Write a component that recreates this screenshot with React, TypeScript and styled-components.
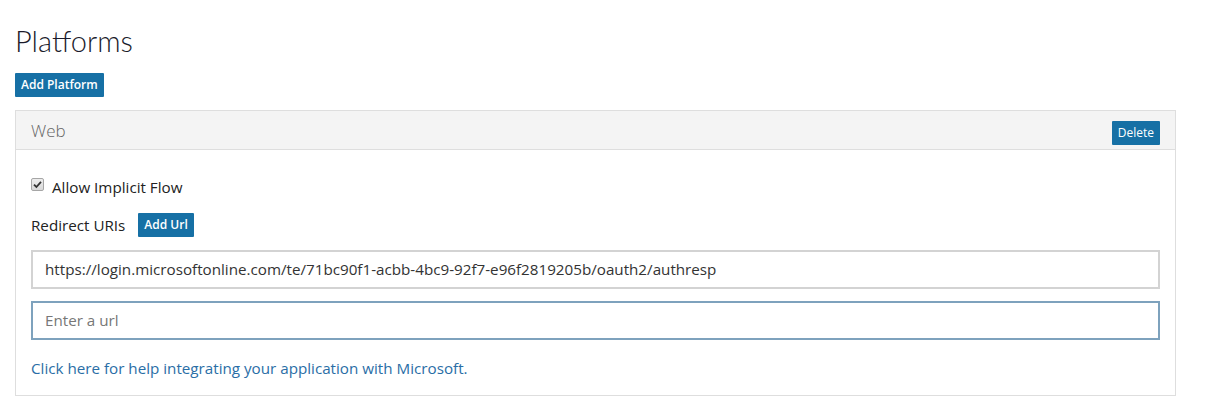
import React, { type FC } from 'react'
import styled, { createGlobalStyle } from 'styled-components'

const primary = '#1670a5'
const fontStack = '"Open Sans", "Noto Sans", "Liberation Sans", sans-serif'

const GlobalStyle = createGlobalStyle`
  body {
    margin: 0;
    background: #fff;
    font-family: ${fontStack};
    color: #222;
  }
`

const Page = styled.div`
  padding: 22px 36px 10px 15px;
`

const Title = styled.h1`
  margin: 0 0 12px;
  font-family: Lato, ${fontStack};
  font-size: 29px;
  line-height: 38px;
  font-weight: 300;
  color: #1b1b2b;
`

const SmallButton = styled.button<{ $semibold?: boolean }>`
  height: 24px;
  padding: 0 6px;
  border: none;
  border-radius: 1px;
  background: ${primary};
  color: #fff;
  font-family: ${fontStack};
  font-size: 12px;
  font-weight: ${({ $semibold }) => ($semibold ? 600 : 400)};
  cursor: pointer;
`

const Panel = styled.section`
  margin-top: 13px;
  border: 1px solid #dedede;
  width: 1161px;
  box-sizing: border-box;
`

const PanelHeader = styled.header`
  display: flex;
  justify-content: space-between;
  align-items: flex-end;
  padding: 10px 15px 4px;
  background: #f4f4f4;
  border-bottom: 1px solid #dedede;
`

const PanelTitle = styled.h2`
  margin: -4px 0 0;
  align-self: center;
  font-size: 17px;
  font-weight: 300;
  color: #666;
  line-height: 24px;
`

const PanelBody = styled.div`
  padding: 27px 15px 17px;
  font-size: 15.2px;
`

const CheckRow = styled.label`
  display: flex;
  align-items: center;
  gap: 8px;
  height: 20px;
  color: #222;
`

const CheckBox = styled.span`
  display: inline-flex;
  align-items: center;
  justify-content: center;
  width: 11px;
  height: 11px;
  margin-top: -4px;
  border: 1px solid #a6a6a6;
  border-radius: 2px;
  background: linear-gradient(#ededed, #d8d8d8);
`

const UriRow = styled.div`
  display: flex;
  align-items: center;
  gap: 13px;
  margin-top: 16px;
`

const UrlInput = styled.input<{ $active?: boolean }>`
  display: block;
  width: 100%;
  box-sizing: border-box;
  height: 39px;
  margin-top: ${({ $active }) => ($active ? 12 : 13)}px;
  padding: 0 12px;
  border: 2px solid ${({ $active }) => ($active ? '#7ea2bd' : '#d3d3d3')};
  border-radius: 0;
  font-family: ${fontStack};
  font-size: 15.2px;
  color: #333;
  outline: none;
  &::placeholder {
    color: #777;
  }
`

const HelpLink = styled.a`
  display: block;
  margin-top: 18px;
  line-height: 20px;
  color: #2a6ea6;
  text-decoration: none;
`

const Check: FC = () => (
  <svg width="9" height="9" viewBox="0 0 9 9">
    <path d="M1 4.6 L3.4 7 L8 1.8" fill="none" stroke="#333" strokeWidth="1.8" />
  </svg>
)

const App: FC = () => (
  <>
    <GlobalStyle />
    <Page>
      <Title>Platforms</Title>
      <SmallButton $semibold>Add Platform</SmallButton>
      <Panel>
        <PanelHeader>
          <PanelTitle>Web</PanelTitle>
          <SmallButton>Delete</SmallButton>
        </PanelHeader>
        <PanelBody>
          <CheckRow>
            <CheckBox><Check /></CheckBox>
            Allow Implicit Flow
          </CheckRow>
          <UriRow>
            Redirect URIs
            <SmallButton $semibold>Add Url</SmallButton>
          </UriRow>
          <UrlInput
            readOnly
            value="https://login.microsoftonline.com/te/71bc90f1-acbb-4bc9-92f7-e96f2819205b/oauth2/authresp"
          />
          <UrlInput $active placeholder="Enter a url" />
          <HelpLink href="#">Click here for help integrating your application with Microsoft.</HelpLink>
        </PanelBody>
      </Panel>
    </Page>
  </>
)

export default App
